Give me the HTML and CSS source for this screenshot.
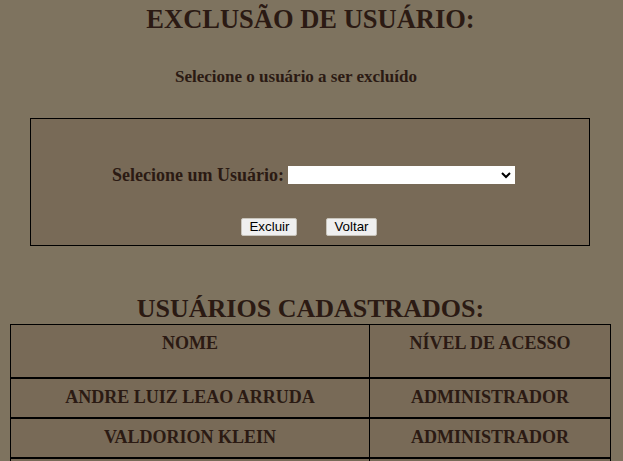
FILE: index.html
```html
<!DOCTYPE html>
<html lang="pt-BR">
<head>
<meta charset="utf-8">
<title>Exclusão de Usuário</title>
<link rel="stylesheet" href="styles.css">
</head>
<body>
<h1 class="title">EXCLUSÃO DE USUÁRIO:</h1>
<p class="subtitle">Selecione o usuário a ser excluído</p>
<form class="panel">
  <div class="field">
    <label class="field-label" for="usuario">Selecione um Usuário:</label>
    <select id="usuario" class="field-select"><option></option></select>
  </div>
  <div class="actions">
    <button type="button" class="btn">Excluir</button>
    <button type="button" class="btn">Voltar</button>
  </div>
</form>
<h2 class="title title-list">USUÁRIOS CADASTRADOS:</h2>
<table class="users">
  <tr class="head"><th class="col-name">NOME</th><th class="col-level">NÍVEL DE ACESSO</th></tr>
  <tr><td>ANDRE LUIZ LEAO ARRUDA</td><td>ADMINISTRADOR</td></tr>
  <tr><td>VALDORION KLEIN</td><td>ADMINISTRADOR</td></tr>
  <tr><td>&nbsp;</td><td>&nbsp;</td></tr>
</table>
</body>
</html>
```

FILE: styles.css
```css
html, body {
  margin: 0;
  padding: 0;
  background: #7e735f;
  color: #2b1a13;
  font-family: "Liberation Serif", "Times New Roman", serif;
  font-weight: bold;
}
body {
  padding: 0 12px 0 10px;
}
.title {
  margin: 0;
  text-align: center;
  font-size: 26.5px;
  line-height: 30px;
  padding-top: 4px;
}
.subtitle {
  margin: 33px 0 0;
  padding-right: 29px;
  text-align: center;
  font-size: 17px;
  line-height: 20px;
}
.panel {
  margin: 31px 21px 0 20px;
  height: 126px;
  border: 1px solid #000;
  background: #786a57;
  display: flex;
  flex-direction: column;
  align-items: center;
}
.field {
  margin-top: 46px;
  display: flex;
  align-items: center;
  gap: 4px;
  margin-left: 7px;
}
.field-label {
  font-size: 18px;
  line-height: 20px;
}
.field-select {
  width: 227px;
  height: 18px;
  border: 1px solid #fff;
  background: #fff;
  font-size: 12px;
  padding: 0;
  margin: 0;
}
.actions {
  margin-top: 33px;
  display: flex;
  gap: 29px;
  margin-right: 2px;
}
.btn {
  font-family: Arial, "Liberation Sans", sans-serif;
  font-size: 13.33px;
  font-weight: normal;
  color: #000;
  background: #efefef;
  border: 1px solid #c8c4bb;
  border-radius: 2px;
  height: 18px;
  padding: 0 7px;
  line-height: 16px;
}
.title-list {
  margin-top: 48px;
  padding-top: 0;
  font-size: 26px;
  line-height: 30px;
}
.users {
  width: 601px;
  border-collapse: collapse;
  border: 1px solid #000;
  background: #786a57;
  font-size: 18px;
  margin-top: 0;
}
.users th, .users td {
  border-left: 1px solid #000;
  border-right: 1px solid #000;
  border-bottom: 2px solid #000;
  text-align: center;
  padding: 0;
  height: 38px;
  font-weight: bold;
}
.users .head th {
  height: 53px;
  vertical-align: top;
  padding-top: 8px;
  box-sizing: border-box;
}
.col-name { width: 359px; }
```
